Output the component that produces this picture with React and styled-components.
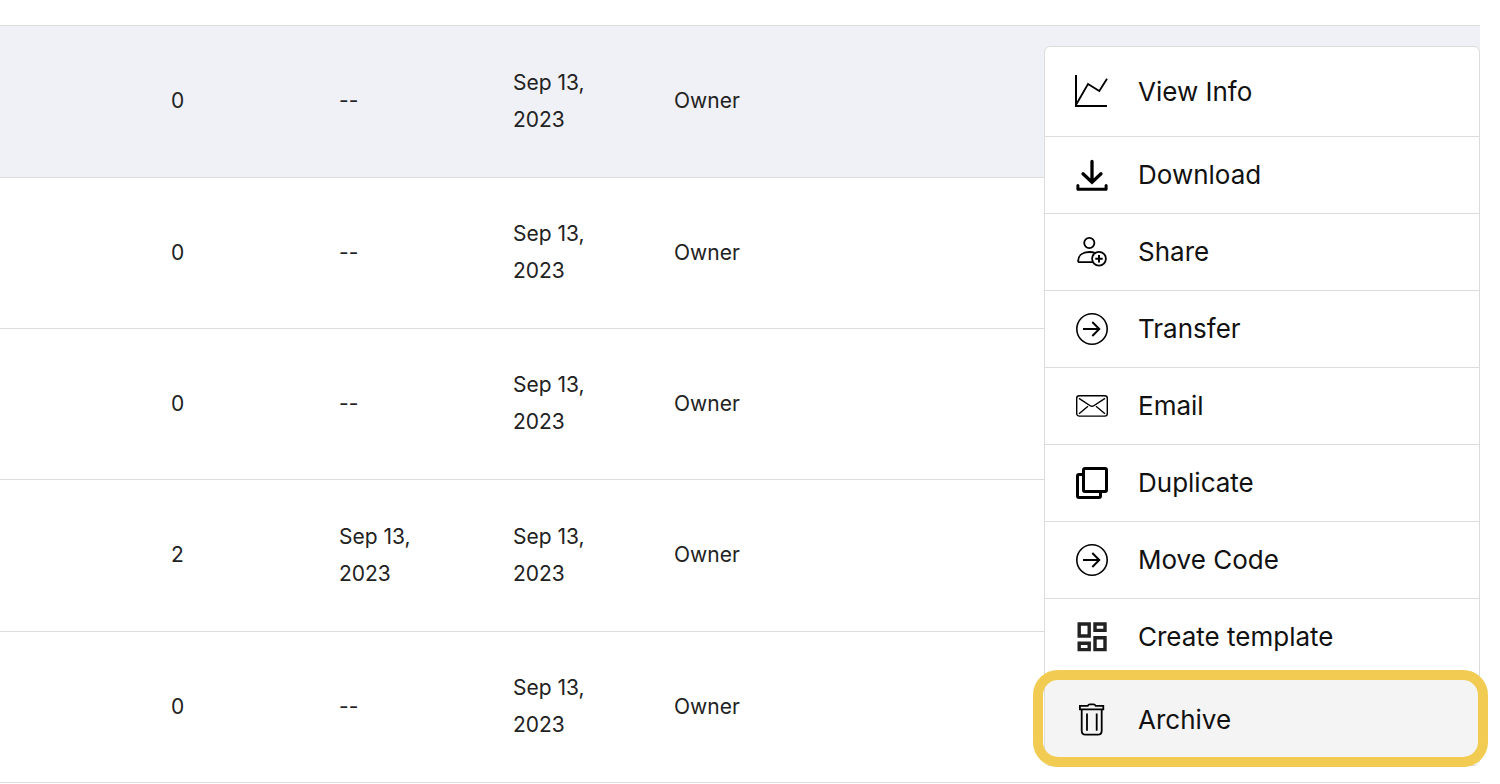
import React from "react";
import styled, { createGlobalStyle } from "styled-components";

const GlobalStyle = createGlobalStyle`
  * { box-sizing: border-box; }
  body {
    margin: 0;
    background: #fff;
    color: #222;
    font-family: Inter, "Liberation Sans", sans-serif;
  }
`;

const Page = styled.main`
  position: relative;
  padding: 25px 20px 0 0;
`;

const Table = styled.table`
  width: 100%;
  table-layout: fixed;
  border-collapse: separate;
  border-spacing: 0;
  border-top: 1px solid #dcdcdc;
  font-size: 21px;
  line-height: 37px;
`;

const Col = styled.col`
  width: ${(p) => p.$width || "auto"};
`;

const Row = styled.tr`
  height: 151px;
  background: ${(p) => (p.$active ? "#f0f1f6" : "#fff")};
  &:nth-child(3n + 1) { height: 152px; }
`;

const Cell = styled.td`
  padding: 0 48px 2px 0;
  border-bottom: 1px solid #dcdcdc;
  vertical-align: middle;
`;

const Menu = styled.div`
  position: absolute;
  top: 46px;
  right: 20px;
  width: 436px;
  display: flex;
  flex-direction: column;
  background: #fff;
  border: 1px solid #dcdcdc;
  border-radius: 6px;
`;

const MenuItem = styled.button`
  position: relative;
  display: flex;
  align-items: center;
  gap: 30px;
  padding: 22px 31px;
  border: 0;
  border-bottom: 1px solid #dcdcdc;
  background: ${(p) => (p.$selected ? "#f4f4f4" : "transparent")};
  color: #111;
  font: inherit;
  font-size: 26px;
  line-height: 32px;
  text-align: left;
  cursor: pointer;

  &:first-child { padding-top: 29px; padding-bottom: 28px; }
  &:last-child { padding-top: 28px; padding-bottom: 29px; border-bottom: 0; }
`;

const Ring = styled.span`
  position: absolute;
  inset: -6px -9px -2px -12px;
  border: 10px solid #f2cb52;
  border-radius: 25px;
  pointer-events: none;
`;

const Glyph = styled.svg`
  flex: none;
  width: 32px;
  height: 32px;
  overflow: visible;
  fill: none;
  stroke: #000;
  stroke-width: ${(p) => p.$weight || 1.6};
`;

const ArrowCircle = () => (
  <Glyph viewBox="0 0 32 32" aria-hidden="true">
    <circle cx="16" cy="16" r="15.2" />
    <path d="M7 16h16M16.3 9l7 7-7 7" strokeWidth="1.9" />
  </Glyph>
);

const icons = {
  info: (
    <Glyph viewBox="0 0 32 32" $weight={2} aria-hidden="true">
      <path d="M0-1V30H31" />
      <path d="M.4 28.3 12 8l11.3 7L31 2.7" strokeWidth="1.8" />
    </Glyph>
  ),
  download: (
    <Glyph viewBox="0 0 32 32" $weight={3} aria-hidden="true">
      <path d="M16 2.500v20.500M7 14.800l9 8.400 9-8.400" strokeWidth="3.300" strokeLinecap="round" />
      <path d="M1.900 26.500v3.700h28.200v-3.700" strokeLinejoin="round" strokeLinecap="round" />
    </Glyph>
  ),
  share: (
    <Glyph viewBox="0 0 32 32" $weight={1.8} aria-hidden="true">
      <circle cx="13.3" cy="7" r="5.1" />
      <path d="M16.6 26.2H3.5c-1 0-1.4-.5-1.3-1.5C2.4 19.5 6.5 16 13.3 16c2.4 0 4.3.3 6 1" />
      <circle cx="23" cy="22.7" r="6.9" />
      <path d="M23 19v7.4M19.3 22.7h7.4" strokeWidth="2" />
    </Glyph>
  ),
  arrow: <ArrowCircle />,
  email: (
    <Glyph viewBox="0 0 32 32" $weight={1.4} aria-hidden="true">
      <rect x=".7" y="5.7" width="30.6" height="20.4" rx="2.6" />
      <path d="M3 8.3l10.8 7.2q2.2 1.5 4.4 0L29 8.3M3 23.7l9-7.4M29 23.7l-9-7.4" />
    </Glyph>
  ),
  duplicate: (
    <Glyph viewBox="0 0 32 32" $weight={3} aria-hidden="true">
      <rect x="7.5" y="1.5" width="23" height="23" rx="1.4" />
      <path d="M7 7.5H3Q1.5 7.5 1.5 9v20q0 1.5 1.5 1.5h20q1.5 0 1.5-1.5v-4" />
    </Glyph>
  ),
  template: (
    <Glyph viewBox="0 0 32 32" $weight={3.4} aria-hidden="true">
      <path
        stroke="#222"
        d="M3.2 3h10v12h-10zM19 3h10v6.400H19zM3.200 22.200h10v6.400h-10zM19 16.800h10v11.800H19z"
      />
    </Glyph>
  ),
  archive: (
    <Glyph viewBox="0 0 32 32" $weight={1.8} aria-hidden="true">
      <path d="M3.900 1.800h7.800q.8-1.500 2-1.500h4q1.200 0 2 1.500h7.600v3.600H3.900z" />
      <path d="M5.700 5.400v21.300q0 4 4 4h12q4 0 4-4v-21.300M11 9.400v17.400M20.700 9.400v17.400" />
    </Glyph>
  ),
};

const menuItems = [
  { label: "View Info", icon: "info" },
  { label: "Download", icon: "download" },
  { label: "Share", icon: "share" },
  { label: "Transfer", icon: "arrow" },
  { label: "Email", icon: "email" },
  { label: "Duplicate", icon: "duplicate" },
  { label: "Move Code", icon: "arrow" },
  { label: "Create template", icon: "template" },
  { label: "Archive", icon: "archive", selected: true },
];

const rows = [
  { count: 0, last: "--", created: "Sep 13, 2023", role: "Owner", active: true },
  { count: 0, last: "--", created: "Sep 13, 2023", role: "Owner" },
  { count: 0, last: "--", created: "Sep 13, 2023", role: "Owner" },
  { count: 2, last: "Sep 13, 2023", created: "Sep 13, 2023", role: "Owner" },
  { count: 0, last: "--", created: "Sep 13, 2023", role: "Owner" },
];

export default function App() {
  return (
    <Page>
      <GlobalStyle />
      <Table>
        <colgroup>
          <Col $width="171px" />
          <Col $width="168px" />
          <Col $width="174px" />
          <Col $width="161px" />
          <Col />
        </colgroup>
        <tbody>
          {rows.map((row, i) => (
            <Row key={i} $active={row.active}>
              <Cell />
              <Cell>{row.count}</Cell>
              <Cell>{row.last}</Cell>
              <Cell>{row.created}</Cell>
              <Cell>{row.role}</Cell>
            </Row>
          ))}
        </tbody>
      </Table>
      <Menu>
        {menuItems.map((item) => (
          <MenuItem key={item.label} type="button" $selected={item.selected}>
            {icons[item.icon]}
            {item.label}
            {item.selected && <Ring />}
          </MenuItem>
        ))}
      </Menu>
    </Page>
  );
}
